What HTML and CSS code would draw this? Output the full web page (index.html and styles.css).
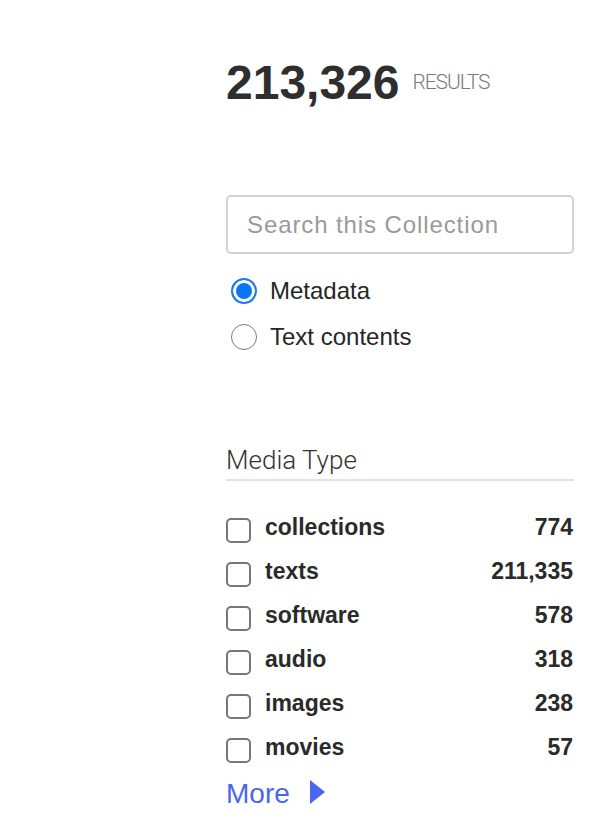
FILE: index.html
```html
<!DOCTYPE html>
<html>
<head>
<meta charset="utf-8">
<link rel="stylesheet" href="styles.css">
</head>
<body>
<div class="sidebar">
  <div class="results">
    <span class="count">213,326</span>
    <span class="results-label">RESULTS</span>
  </div>

  <input class="search" type="text" placeholder="Search this Collection">

  <div class="radios">
    <label class="radio-row"><input type="radio" name="scope" checked><span>Metadata</span></label>
    <label class="radio-row"><input type="radio" name="scope"><span>Text contents</span></label>
  </div>

  <h2 class="facet-title">Media Type</h2>

  <ul class="facets">
    <li class="facet"><input type="checkbox"><span class="facet-name">collections</span><span class="facet-count">774</span></li>
    <li class="facet"><input type="checkbox"><span class="facet-name">texts</span><span class="facet-count">211,335</span></li>
    <li class="facet"><input type="checkbox"><span class="facet-name">software</span><span class="facet-count">578</span></li>
    <li class="facet"><input type="checkbox"><span class="facet-name">audio</span><span class="facet-count">318</span></li>
    <li class="facet"><input type="checkbox"><span class="facet-name">images</span><span class="facet-count">238</span></li>
    <li class="facet"><input type="checkbox"><span class="facet-name">movies</span><span class="facet-count">57</span></li>
  </ul>

  <a class="more" href="#">More <span class="tri"></span></a>
</div>
</body>
</html>
```
FILE: styles.css
```css
html, body {
  margin: 0;
  padding: 0;
  background: #fff;
}
body {
  font-family: "Liberation Sans", Arial, sans-serif;
  color: #2c2c2c;
}
.sidebar {
  width: 348px;
  margin-left: 226px;
  padding-top: 59px;
  display: flex;
  flex-direction: column;
}
.results {
  display: flex;
  align-items: flex-start;
}
.count {
  font-size: 48px;
  line-height: 48px;
  font-weight: bold;
  color: #2e2e2e;
}
.results-label {
  font-family: Roboto, "Liberation Sans", sans-serif;
  font-weight: 300;
  font-size: 21px;
  line-height: 21px;
  letter-spacing: -1.1px;
  color: #7a7a7a;
  margin-top: 13px;
  margin-left: 13px;
}
.search {
  box-sizing: border-box;
  margin: 88px 0 0 0;
  width: 348px;
  height: 59px;
  border: 2px solid #d2d2d2;
  border-radius: 5px;
  padding: 0 0 0 19px;
  font-family: "Liberation Sans", Arial, sans-serif;
  font-size: 24px;
  letter-spacing: 0.9px;
  color: #333;
  outline: none;
}
.search::placeholder {
  color: #9a9a9a;
}
.radios {
  margin-top: 14px;
  display: flex;
  flex-direction: column;
}
.radio-row {
  height: 46px;
  display: flex;
  align-items: center;
  font-size: 24px;
  color: #262626;
}
.radio-row input {
  appearance: none;
  -webkit-appearance: none;
  box-sizing: border-box;
  width: 26px;
  height: 26px;
  margin: 0 13px 0 5px;
  border: 1.5px solid #7a7a7a;
  border-radius: 50%;
  background: #fff;
}
.radio-row input:checked {
  border: 2px solid #1a7cf5;
  box-shadow: inset 0 0 0 3px #fff;
  background: #0a76f6;
}
.facet-title {
  margin: 84px 0 0 0;
  font-family: Roboto, "Liberation Sans", sans-serif;
  font-weight: 300;
  font-size: 26px;
  line-height: 32px;
  color: #333;
  padding-bottom: 3px;
  border-bottom: 2px solid #e4e4e4;
}
.facets {
  list-style: none;
  margin: 24px 0 0 0;
  padding: 0;
}
.facet {
  height: 44px;
  display: flex;
  align-items: center;
  font-size: 23px;
  font-weight: bold;
  color: #2a2a2a;
}
.facet input {
  appearance: none;
  -webkit-appearance: none;
  box-sizing: border-box;
  width: 25px;
  height: 25px;
  margin: 6px 14px 0 0;
  border: 2px solid #777;
  border-radius: 5px;
  background: #fff;
}
.facet-name {
  flex: 1;
}
.facet-count {
  margin-right: 1px;
}
.more {
  margin-top: 9px;
  font-size: 28px;
  line-height: 32px;
  color: #4a66ef;
  text-decoration: none;
  display: flex;
  align-items: center;
}
.tri {
  width: 0;
  height: 0;
  margin-left: 20px;
  margin-top: -4px;
  border-top: 12px solid transparent;
  border-bottom: 12px solid transparent;
  border-left: 15px solid #4a66ef;
}
```
